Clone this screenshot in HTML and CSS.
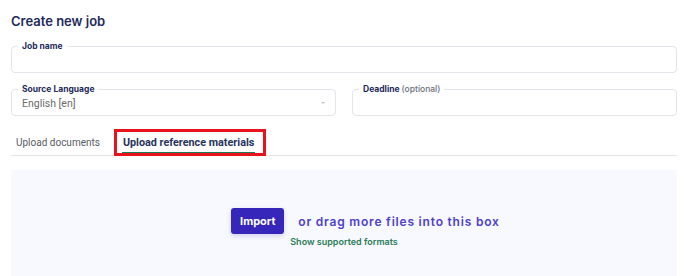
FILE: index.html
```html
<!DOCTYPE html>
<html lang="en">
<head>
    <meta charset="UTF-8">
    <meta name="viewport" content="width=device-width, initial-scale=1.0">
    <title>Create new job</title>
    <link rel="stylesheet" href="styles.css">
</head>
<body>
    <div class="container">
        <h1 class="title">Create new job</h1>

        <fieldset class="field">
            <legend>Job name</legend>
            <input type="text" class="field-input">
        </fieldset>

        <div class="field-row">
            <fieldset class="field">
                <legend>Source Language</legend>
                <div class="select">
                    <span>English [en]</span>
                    <span class="caret"></span>
                </div>
            </fieldset>
            <fieldset class="field">
                <legend>Deadline <span class="optional">(optional)</span></legend>
                <input type="text" class="field-input">
            </fieldset>
        </div>

        <div class="tabs">
            <div class="tab">Upload documents</div>
            <div class="tab active">Upload reference materials</div>
        </div>

        <div class="dropzone">
            <div class="drop-row">
                <button class="import-btn">Import</button>
                <span class="drag-text">or drag more files into this box</span>
            </div>
            <a href="#" class="formats-link">Show supported formats</a>
        </div>
    </div>
</body>
</html>
```

FILE: styles.css
```css
body {
    margin: 0;
    background: #fff;
    font-family: 'Inter', 'Roboto', sans-serif;
}
.container {
    padding: 12px 7px 0 11px;
    height: 276px;
    box-sizing: border-box;
    overflow: hidden;
}
.title {
    margin: 0;
    font-size: 13px;
    line-height: 18px;
    font-weight: 600;
    color: #1d2a5c;
}
.field {
    margin: 11px 0 0;
    padding: 0 6px 3px;
    border: 1px solid #e4e5ea;
    border-radius: 4px;
    min-width: 0;
}
.field legend {
    padding: 0 4px;
    font-size: 8.5px;
    line-height: 10px;
    font-weight: 700;
    color: #1d2a5c;
}
.field legend .optional {
    font-weight: 500;
    color: #6b6f80;
}
.field-input {
    display: block;
    width: 100%;
    height: 18px;
    box-sizing: border-box;
    border: none;
    outline: none;
    padding: 0 4px;
    font-family: inherit;
    font-size: 11px;
    background: transparent;
}
.field-row {
    display: grid;
    grid-template-columns: 1fr 1fr;
    gap: 16px;
}
.select {
    display: flex;
    justify-content: space-between;
    align-items: center;
    height: 18px;
    padding: 0 4px;
    font-family: 'Roboto', sans-serif;
    font-size: 10.5px;
    color: #6a6a6a;
}
.caret {
    width: 0;
    height: 0;
    border-left: 2px solid transparent;
    border-right: 2px solid transparent;
    border-top: 2px solid #c4c4c8;
}
.tabs {
    display: flex;
    margin-top: 12px;
    border-bottom: 1px solid #e2e2e6;
    font-family: 'Roboto', sans-serif;
    font-size: 10px;
    line-height: 13px;
}
.tab {
    padding: 8px 5px 6px;
    color: #595b63;
}
.tab.active {
    position: relative;
    margin-left: 17px;
    padding: 8px 1px 3px;
    font-size: 10.8px;
    font-weight: 700;
    color: #27335e;
    border-bottom: 3px solid #1d7a57;
}
.tab.active::after {
    content: "";
    position: absolute;
    top: 1px;
    bottom: -4px;
    left: -8px;
    right: -11px;
    border: 3px solid #e8131d;
}
.dropzone {
    margin-top: 14px;
    padding-top: 38px;
    height: 120px;
    background: #f8f9fe;
    display: flex;
    flex-direction: column;
    align-items: center;
}
.drop-row {
    display: flex;
    align-items: center;
    gap: 14px;
    padding-left: 43px;
}
.import-btn {
    width: 53px;
    height: 26px;
    border: none;
    border-radius: 3px;
    background: #3626b9;
    color: #fff;
    font-family: inherit;
    font-size: 11px;
    font-weight: 700;
    box-shadow: 0 2px 5px rgba(54, 38, 185, 0.2);
    cursor: pointer;
}
.drag-text {
    font-size: 12px;
    font-weight: 600;
    letter-spacing: 0.8px;
    color: #4c40cc;
}
.formats-link {
    margin-top: 2px;
    font-size: 9px;
    font-weight: 600;
    color: #2a7b57;
    text-decoration: none;
}
```
